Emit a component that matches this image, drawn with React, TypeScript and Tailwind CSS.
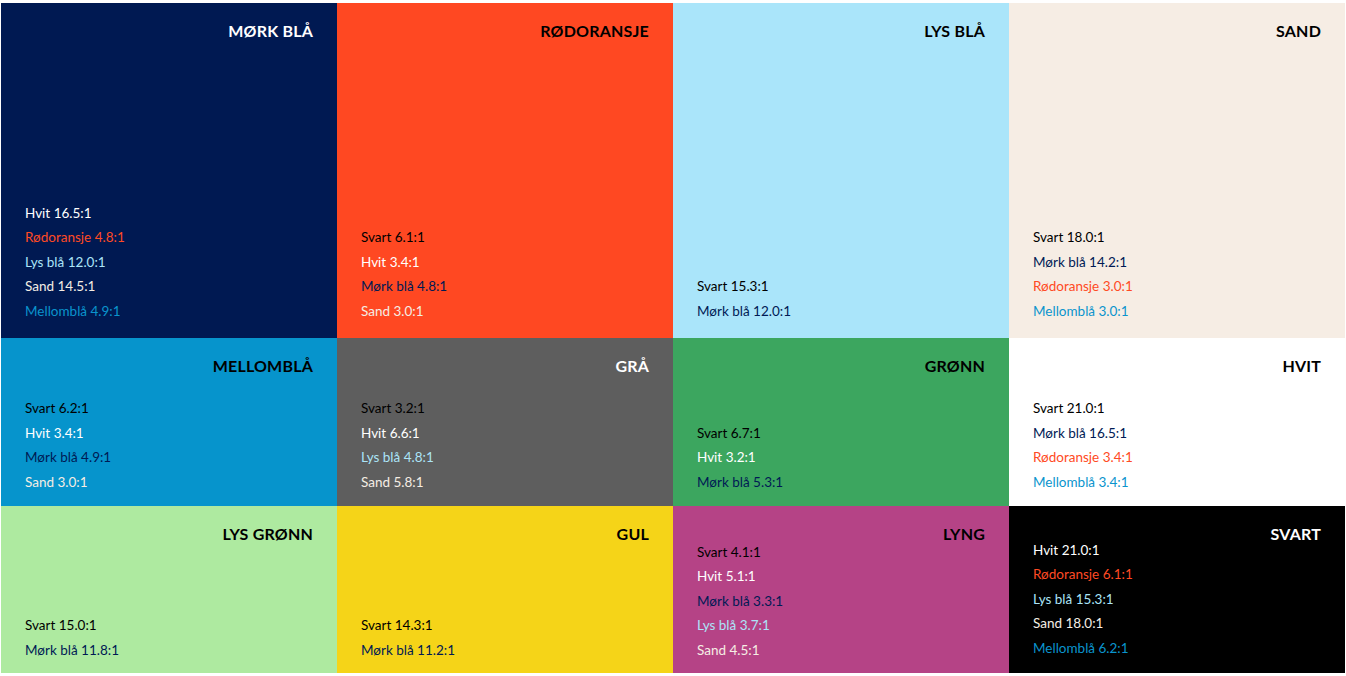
import React from 'react';

type Item = { label: string; text: string };

interface Swatch {
    name: string;
    bg: string;
    title: string;
    pb: string;
    items: Item[];
}

const TXT = {
    hvit: 'text-white',
    svart: 'text-black',
    rod: 'text-[#ff4a24]',
    lys: 'text-[#abe4f8]',
    sand: 'text-[#f5ede4]',
    mellom: 'text-[#0a94cd]',
    mork: 'text-[#001a54]',
};

const swatches: Swatch[] = [
    {
        name: 'MØRK BLÅ', bg: 'bg-[#001952]', title: 'text-white', pb: 'pb-[15px]',
        items: [
            { label: 'Hvit 16.5:1', text: TXT.hvit },
            { label: 'Rødoransje 4.8:1', text: TXT.rod },
            { label: 'Lys blå 12.0:1', text: TXT.lys },
            { label: 'Sand 14.5:1', text: TXT.sand },
            { label: 'Mellomblå 4.9:1', text: TXT.mellom },
        ],
    },
    {
        name: 'RØDORANSJE', bg: 'bg-[#ff4822]', title: 'text-black', pb: 'pb-[15px]',
        items: [
            { label: 'Svart 6.1:1', text: TXT.svart },
            { label: 'Hvit 3.4:1', text: TXT.hvit },
            { label: 'Mørk blå 4.8:1', text: TXT.mork },
            { label: 'Sand 3.0:1', text: TXT.sand },
        ],
    },
    {
        name: 'LYS BLÅ', bg: 'bg-[#aae5fa]', title: 'text-black', pb: 'pb-[15px]',
        items: [
            { label: 'Svart 15.3:1', text: TXT.svart },
            { label: 'Mørk blå 12.0:1', text: TXT.mork },
        ],
    },
    {
        name: 'SAND', bg: 'bg-[#f6ede4]', title: 'text-black', pb: 'pb-[15px]',
        items: [
            { label: 'Svart 18.0:1', text: TXT.svart },
            { label: 'Mørk blå 14.2:1', text: TXT.mork },
            { label: 'Rødoransje 3.0:1', text: TXT.rod },
            { label: 'Mellomblå 3.0:1', text: TXT.mellom },
        ],
    },
    {
        name: 'MELLOMBLÅ', bg: 'bg-[#0694cc]', title: 'text-black', pb: 'pb-3',
        items: [
            { label: 'Svart 6.2:1', text: TXT.svart },
            { label: 'Hvit 3.4:1', text: TXT.hvit },
            { label: 'Mørk blå 4.9:1', text: TXT.mork },
            { label: 'Sand 3.0:1', text: TXT.sand },
        ],
    },
    {
        name: 'GRÅ', bg: 'bg-[#5e5e5e]', title: 'text-white', pb: 'pb-3',
        items: [
            { label: 'Svart 3.2:1', text: TXT.svart },
            { label: 'Hvit 6.6:1', text: TXT.hvit },
            { label: 'Lys blå 4.8:1', text: TXT.lys },
            { label: 'Sand 5.8:1', text: TXT.sand },
        ],
    },
    {
        name: 'GRØNN', bg: 'bg-[#3ca65f]', title: 'text-black', pb: 'pb-3',
        items: [
            { label: 'Svart 6.7:1', text: TXT.svart },
            { label: 'Hvit 3.2:1', text: TXT.hvit },
            { label: 'Mørk blå 5.3:1', text: TXT.mork },
        ],
    },
    {
        name: 'HVIT', bg: 'bg-white', title: 'text-black', pb: 'pb-3',
        items: [
            { label: 'Svart 21.0:1', text: TXT.svart },
            { label: 'Mørk blå 16.5:1', text: TXT.mork },
            { label: 'Rødoransje 3.4:1', text: TXT.rod },
            { label: 'Mellomblå 3.4:1', text: TXT.mellom },
        ],
    },
    {
        name: 'LYS GRØNN', bg: 'bg-[#aeeaa0]', title: 'text-black', pb: 'pb-[11px]',
        items: [
            { label: 'Svart 15.0:1', text: TXT.svart },
            { label: 'Mørk blå 11.8:1', text: TXT.mork },
        ],
    },
    {
        name: 'GUL', bg: 'bg-[#f5d418]', title: 'text-black', pb: 'pb-[11px]',
        items: [
            { label: 'Svart 14.3:1', text: TXT.svart },
            { label: 'Mørk blå 11.2:1', text: TXT.mork },
        ],
    },
    {
        name: 'LYNG', bg: 'bg-[#b54386]', title: 'text-black', pb: 'pb-[11px]',
        items: [
            { label: 'Svart 4.1:1', text: TXT.svart },
            { label: 'Hvit 5.1:1', text: TXT.hvit },
            { label: 'Mørk blå 3.3:1', text: TXT.mork },
            { label: 'Lys blå 3.7:1', text: TXT.lys },
            { label: 'Sand 4.5:1', text: TXT.sand },
        ],
    },
    {
        name: 'SVART', bg: 'bg-black', title: 'text-white', pb: 'pb-[13px]',
        items: [
            { label: 'Hvit 21.0:1', text: TXT.hvit },
            { label: 'Rødoransje 6.1:1', text: TXT.rod },
            { label: 'Lys blå 15.3:1', text: TXT.lys },
            { label: 'Sand 18.0:1', text: TXT.sand },
            { label: 'Mellomblå 6.2:1', text: TXT.mellom },
        ],
    },
];

// Tittel oppe til høyre og kontrastliste nederst deler samme rutenettcelle
const SwatchCard: React.FC<{ swatch: Swatch }> = ({ swatch }) => (
    <div className={`${swatch.bg} grid grid-cols-1 grid-rows-1 min-h-0 overflow-hidden px-6 pt-4 ${swatch.pb}`}>
        <h2 className={`${swatch.title} col-start-1 row-start-1 self-start justify-self-end text-[16px] leading-6 font-bold tracking-[0.2px]`}>
            {swatch.name}
        </h2>
        <ul className="col-start-1 row-start-1 self-end">
            {swatch.items.map((item) => (
                <li key={item.label} className={`${item.text} text-[13.5px] leading-[24.5px]`}>
                    {item.label}
                </li>
            ))}
        </ul>
    </div>
);

export default function App() {
    return (
        <div className="w-[1346px] h-[676px] bg-white pt-[3px] pl-[1px] font-['Lato','Open_Sans',sans-serif]">
            <div className="grid grid-cols-[336px_336px_336px_336px] grid-rows-[335px_168px_167px] w-[1344px]">
                {swatches.map((s) => (
                    <SwatchCard key={s.name} swatch={s} />
                ))}
            </div>
        </div>
    );
}
